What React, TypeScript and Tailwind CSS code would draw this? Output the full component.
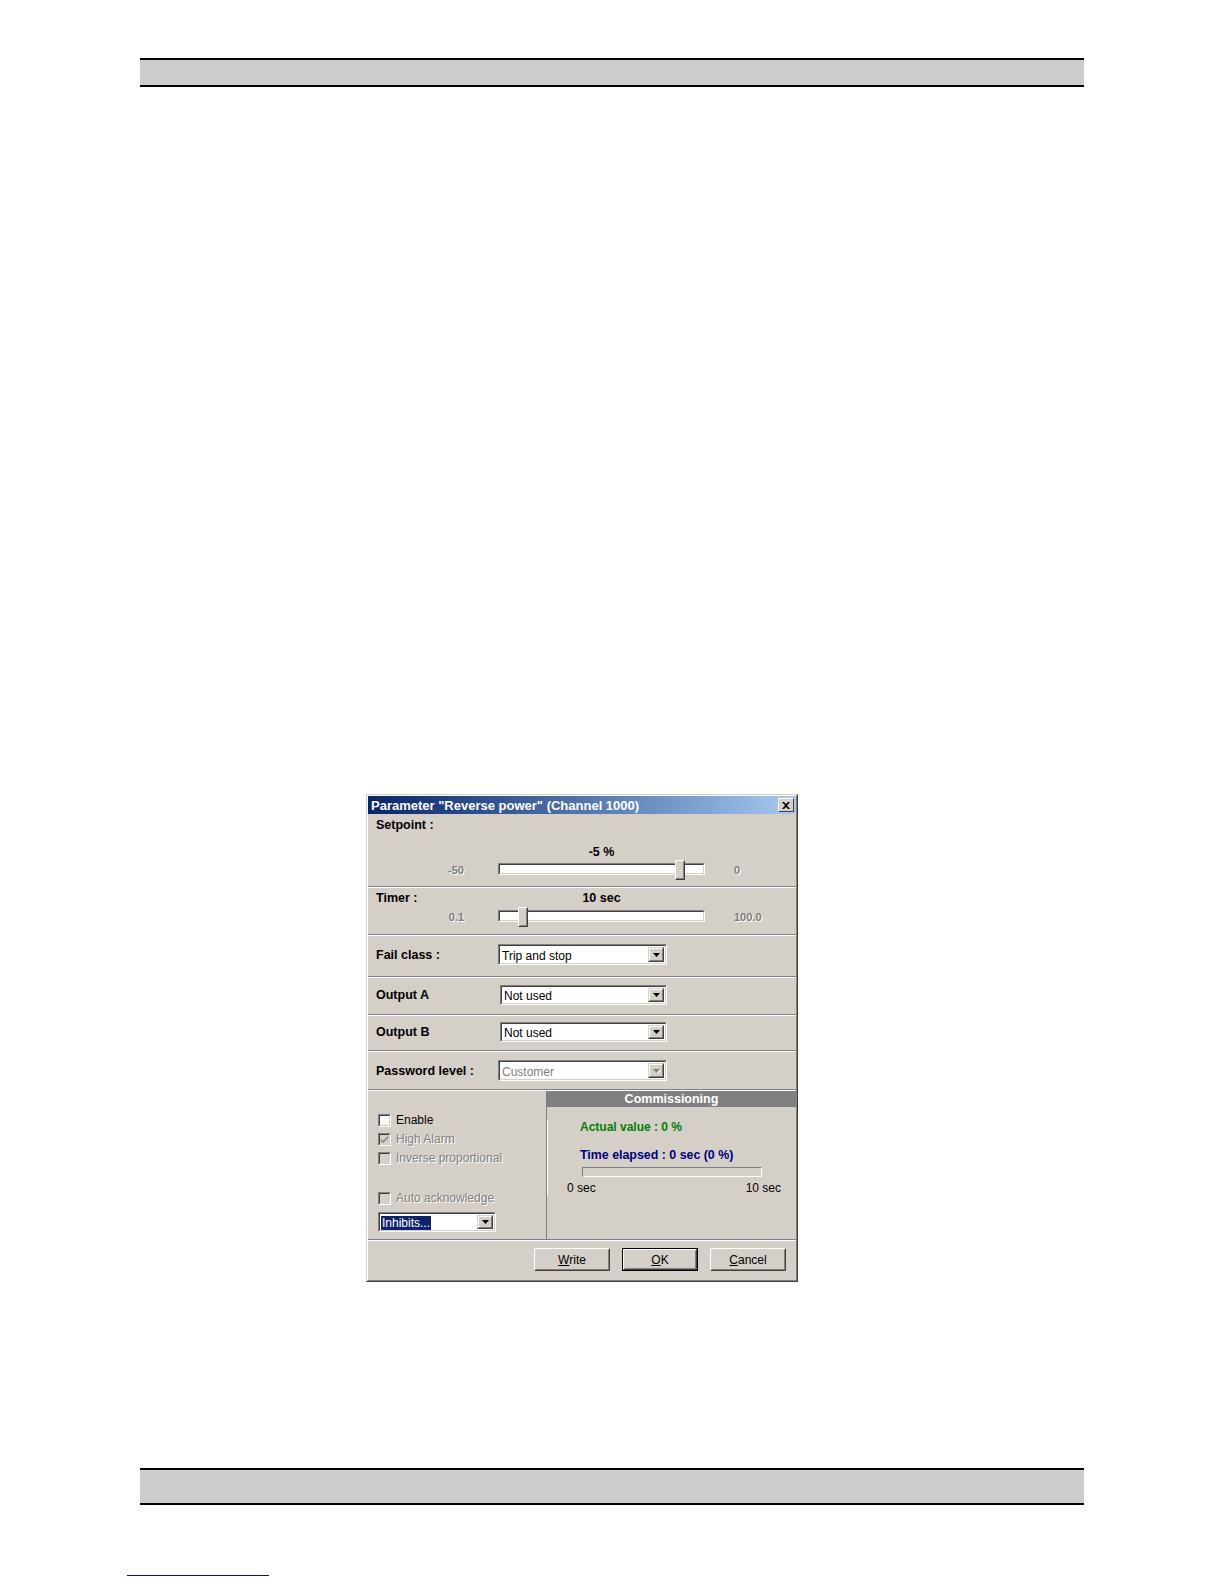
import React from 'react'

const FONT = "font-['Liberation_Sans',Arial,sans-serif]"

function Sep() {
  return (
    <div>
      <div className="h-px bg-[#808080]" />
      <div className="h-px bg-white" />
    </div>
  )
}

function Arrow({ disabled }: { disabled?: boolean }) {
  return (
    <svg width="7" height="4" viewBox="0 0 7 4">
      {disabled && <polygon points="1,1 8,1 4.5,5" fill="#ffffff" />}
      <polygon points="0,0 7,0 3.5,4" fill={disabled ? '#808080' : '#000000'} />
    </svg>
  )
}

function DropButton({ disabled }: { disabled?: boolean }) {
  return (
    <div className="h-full w-[16px] border border-t-[#d4d0c8] border-l-[#d4d0c8] border-r-[#404040] border-b-[#404040]">
      <div className="flex h-full items-center justify-center border border-t-white border-l-white border-r-[#808080] border-b-[#808080] bg-[#d4d0c8]">
        <Arrow disabled={disabled} />
      </div>
    </div>
  )
}

function Select({
  value,
  width,
  height,
  disabled,
  highlighted,
}: {
  value: string
  width: string
  height: string
  disabled?: boolean
  highlighted?: boolean
}) {
  return (
    <div className={`${width} ${height} border border-t-[#808080] border-l-[#808080] border-r-white border-b-white`}>
      <div className="flex h-full items-center border border-t-[#404040] border-l-[#404040] border-r-[#d4d0c8] border-b-[#d4d0c8] bg-white p-px">
        <div className="flex-1 overflow-hidden whitespace-nowrap">
          {highlighted ? (
            <span className="bg-[#0a246a] px-px text-[12px] leading-[14px] text-white">{value}</span>
          ) : (
            <span className={`pl-[1px] text-[12px] leading-[14px] ${disabled ? 'text-[#808080]' : 'text-black'}`}>
              {value}
            </span>
          )}
        </div>
        <DropButton disabled={disabled} />
      </div>
    </div>
  )
}

function Slider({ pct }: { pct: number }) {
  const left = Math.round(pct * (207 - 10))
  return (
    <div className="relative h-[20px] w-[207px] pt-[3px]">
      <div className="h-[12px] border border-t-[#808080] border-l-[#808080] border-r-white border-b-white">
        <div className="h-full border border-t-[#404040] border-l-[#404040] border-r-[#d4d0c8] border-b-[#d4d0c8] bg-white" />
      </div>
      <div
        className="absolute top-0 h-[20px] w-[10px] border border-t-white border-l-white border-r-[#404040] border-b-[#404040]"
        style={{ left }}
      >
        <div className="h-full border border-t-[#d4d0c8] border-l-[#d4d0c8] border-r-[#808080] border-b-[#808080] bg-[#d4d0c8]" />
      </div>
    </div>
  )
}

function Checkbox({ label, checked, disabled }: { label: string; checked?: boolean; disabled?: boolean }) {
  return (
    <div className="flex h-[16px] items-center gap-[5px]">
      <div className="h-[13px] w-[13px] border border-t-[#808080] border-l-[#808080] border-r-white border-b-white">
        <div
          className={`flex h-full items-center justify-center border border-t-[#404040] border-l-[#404040] border-r-[#d4d0c8] border-b-[#d4d0c8] ${
            disabled ? 'bg-[#d4d0c8]' : 'bg-white'
          }`}
        >
          {checked && (
            <svg width="7" height="7" viewBox="0 0 7 7">
              <path d="M0 3 L2 5 L7 0 L7 2 L2 7 L0 5 Z" fill="#808080" />
            </svg>
          )}
        </div>
      </div>
      <span
        className={`text-[12px] leading-[14px] ${
          disabled ? 'text-[#808080] [text-shadow:1px_1px_0_#ffffff]' : 'text-black'
        }`}
      >
        {label}
      </span>
    </div>
  )
}

function Button({ label, isDefault }: { label: string; isDefault?: boolean }) {
  return (
    <div className={`h-[23px] w-[76px] ${isDefault ? 'border border-black' : ''}`}>
      <div className="h-full border border-t-white border-l-white border-r-[#404040] border-b-[#404040]">
        <div className="flex h-full items-center justify-center border border-t-[#d4d0c8] border-l-[#d4d0c8] border-r-[#808080] border-b-[#808080] bg-[#d4d0c8] text-[12px] leading-[14px]">
          <span className="underline underline-offset-1">{label[0]}</span>
          <span>{label.slice(1)}</span>
        </div>
      </div>
    </div>
  )
}

function Dialog() {
  const label = 'text-[12.5px] font-bold leading-[14px]'
  const minmax = 'text-[11px] font-bold leading-[14px] text-[#7c7c7c] [text-shadow:1px_1px_0_#ffffff]'
  return (
    <div className="w-[432px] border border-t-[#d4d0c8] border-l-[#d4d0c8] border-r-[#404040] border-b-[#404040]">
      <div className="border border-t-white border-l-white border-r-[#808080] border-b-[#808080] bg-[#d4d0c8]">
        {/* title bar */}
        <div className="flex h-[18px] items-center justify-between bg-linear-to-r from-[#0a246a] to-[#a6caf0] pl-[3px] pr-[2px]">
          <span className="text-[13px] font-bold leading-none text-white">
            {'Parameter "Reverse power" (Channel 1000)'}
          </span>
          <div className="h-[14px] w-[16px] border border-t-white border-l-white border-r-[#404040] border-b-[#404040]">
            <div className="flex h-full items-center justify-center bg-[#d4d0c8]">
              <svg width="8" height="7" viewBox="0 0 8 7">
                <path d="M0 0 L2 0 L4 2 L6 0 L8 0 L5 3.5 L8 7 L6 7 L4 5 L2 7 L0 7 L3 3.5 Z" fill="#000" />
              </svg>
            </div>
          </div>
        </div>

        {/* setpoint */}
        <div className="h-[72px] pt-[4px]">
          <div className={`pl-[8px] ${label}`}>Setpoint :</div>
          <div className="mt-[13px] pl-[130px]">
            <div className={`w-[207px] text-center ${label}`}>-5 %</div>
          </div>
          <div className="mt-[1px] flex h-[20px] items-center">
            <div className={`w-[96px] text-right ${minmax}`}>-50</div>
            <div className="ml-[34px]">
              <Slider pct={0.9} />
            </div>
            <div className={`ml-[29px] ${minmax}`}>0</div>
          </div>
        </div>
        <Sep />

        {/* timer */}
        <div className="h-[46px] pt-[3px]">
          <div className="flex">
            <div className={`w-[130px] pl-[8px] ${label}`}>Timer :</div>
            <div className={`w-[207px] text-center ${label}`}>10 sec</div>
          </div>
          <div className="mt-[2px] flex h-[20px] items-center">
            <div className={`w-[96px] text-right ${minmax}`}>0.1</div>
            <div className="ml-[34px]">
              <Slider pct={0.099} />
            </div>
            <div className={`ml-[29px] ${minmax}`}>100.0</div>
          </div>
        </div>
        <Sep />

        {/* fail class */}
        <div className="flex h-[40px] items-start pt-[8px]">
          <div className={`flex h-[21px] w-[130px] items-center pl-[8px] ${label}`}>Fail class :</div>
          <Select value="Trip and stop" width="w-[169px]" height="h-[21px]" />
        </div>
        <Sep />

        {/* output A */}
        <div className="flex h-[36px] items-start pt-[7px]">
          <div className={`flex h-[20px] w-[132px] items-center pl-[8px] ${label}`}>Output A</div>
          <Select value="Not used" width="w-[167px]" height="h-[20px]" />
        </div>
        <Sep />

        {/* output B */}
        <div className="flex h-[34px] items-start pt-[6px]">
          <div className={`flex h-[20px] w-[132px] items-center pl-[8px] ${label}`}>Output B</div>
          <Select value="Not used" width="w-[167px]" height="h-[20px]" />
        </div>
        <Sep />

        {/* password level */}
        <div className="flex h-[37px] items-start pt-[8px]">
          <div className={`flex h-[21px] w-[130px] items-center pl-[8px] ${label}`}>Password level :</div>
          <Select value="Customer" width="w-[169px]" height="h-[21px]" disabled />
        </div>
        <Sep />

        {/* bottom */}
        <div className="flex h-[148px]">
          <div className="w-[178px] pl-[10px]">
            <div className="mt-[21px]">
              <Checkbox label="Enable" />
            </div>
            <div className="mt-[3px]">
              <Checkbox label="High Alarm" checked disabled />
            </div>
            <div className="mt-[3px]">
              <Checkbox label="Inverse proportional" disabled />
            </div>
            <div className="mt-[24px]">
              <Checkbox label="Auto acknowledge" disabled />
            </div>
            <div className="mt-[6px]">
              <Select value="Inhibits..." width="w-[118px]" height="h-[20px]" highlighted />
            </div>
          </div>
          <div className="flex-1 border-l border-l-[#808080]">
            <div className="flex h-[16px] items-center justify-center bg-[#808080] text-[12.5px] font-bold leading-none text-white">
              Commissioning
            </div>
            <div className="border-l border-l-white">
              <div className="mt-[13px] pl-[32px] text-[12px] font-bold leading-[14px] text-[#008000]">
                Actual value : 0 %
              </div>
              <div className="mt-[14px] pl-[32px] text-[12.4px] font-bold leading-[14px] text-[#000080]">
                Time elapsed : 0 sec (0 %)
              </div>
              <div className="ml-[34px] mt-[5px] h-[10px] w-[180px] border border-t-[#808080] border-l-[#808080] border-r-white border-b-white" />
              <div className="ml-[19px] mt-[4px] flex w-[214px] justify-between text-[12px] leading-[14px]">
                <span>0 sec</span>
                <span>10 sec</span>
              </div>
            </div>
          </div>
        </div>
        <Sep />

        {/* buttons */}
        <div className="flex h-[39px] justify-end gap-[12px] pr-[10px] pt-[7px]">
          <Button label="Write" />
          <Button label="OK" isDefault />
          <Button label="Cancel" />
        </div>
      </div>
    </div>
  )
}

export default function App() {
  return (
    <div className={`min-h-[1584px] w-[1224px] bg-white text-black ${FONT}`}>
      <div className="pt-[58px]">
        <div className="ml-[140px] h-[29px] w-[944px] border-y-2 border-black bg-[#cccccc]" />
      </div>
      <div className="ml-[366px] mt-[707px]">
        <Dialog />
      </div>
      <div className="ml-[140px] mt-[186px] h-[37px] w-[944px] border-y-2 border-black bg-[#cccccc]" />
      <div className="ml-[127px] mt-[70px] h-px w-[142px] bg-[#0000ff]" />
    </div>
  )
}
